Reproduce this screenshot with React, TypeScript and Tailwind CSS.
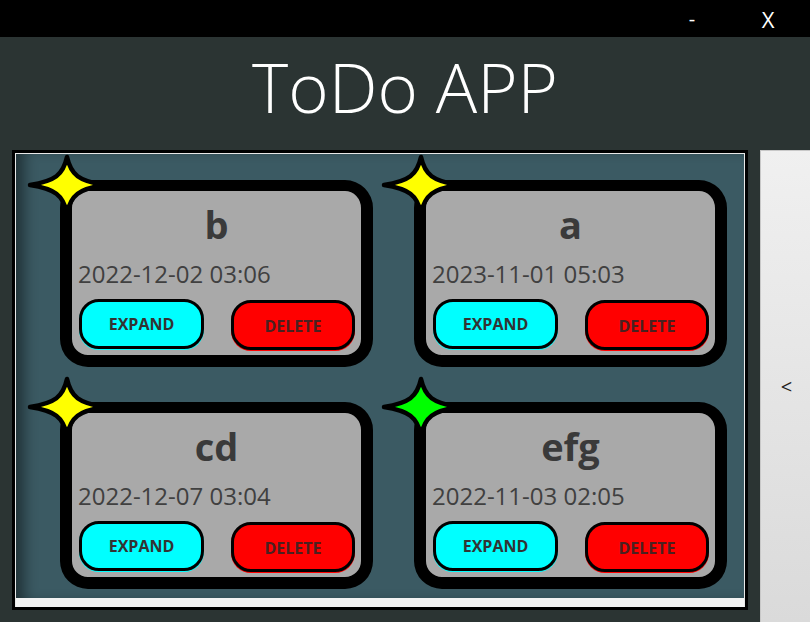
import React from "react";

type Todo = { title: string; date: string; star: string };

const todos: Todo[] = [
  { title: "b", date: "2022-12-02 03:06", star: "#ffff00" },
  { title: "a", date: "2023-11-01 05:03", star: "#ffff00" },
  { title: "cd", date: "2022-12-07 03:04", star: "#ffff00" },
  { title: "efg", date: "2022-11-03 02:05", star: "#00ff00" },
];

function Star({ color }: { color: string }) {
  return (
    <svg
      width="82"
      height="62"
      viewBox="0 0 82 62"
      className="absolute left-[-46px] top-[-37px]"
    >
      <path
        d="M41,3 C45,21 53,27 78,31 C53,35 45,41 41,59 C37,41 29,35 4,31 C29,27 37,21 41,3 Z"
        fill={color}
        stroke="#000"
        strokeWidth="4.5"
        strokeLinejoin="round"
      />
    </svg>
  );
}

function Card({ t }: { t: Todo }) {
  return (
    <div className="relative h-[187px] w-[313px] rounded-[28px] border-[12px] border-t-[11px] border-black bg-[#a9a9a9]">
      <div className="flex h-full flex-col rounded-[16px]">
        <div className="mt-[14px] text-center text-[38px] font-bold leading-[38px] text-[#3a3a3a]">
          {t.title}
        </div>
        <div className="mt-[19px] pl-[6px] text-[24px] leading-[24px] text-[#404040]">
          {t.date}
        </div>
        <div className="mt-[13px] flex justify-between pl-[7px] pr-[6px]">
          <button className="h-[50px] w-[125px] rounded-[20px] border-[3px] border-black bg-[#00ffff] text-[16px] font-bold text-[#333] shadow-[0_1px_0_#00ffff]">
            EXPAND
          </button>
          <button className="mt-[1px] h-[50px] w-[124px] rounded-[20px] border-[3px] border-black bg-[#ff0000] pt-[2px] text-[16px] font-bold text-[#4a2020] shadow-[0_1px_0_#ff0000]">
            DELETE
          </button>
        </div>
      </div>
      <Star color={t.star} />
    </div>
  );
}

export default function App() {
  return (
    <div
      className="h-[622px] w-[810px] overflow-hidden bg-[#2b3433]"
      style={{ fontFamily: '"Open Sans", "Noto Sans", sans-serif' }}
    >
      {/* title bar */}
      <div className="flex h-[37px] justify-end bg-black pr-[4px] text-white">
        <div className="flex w-[76px] items-center justify-center text-[20px] leading-none">-</div>
        <div className="flex w-[76px] items-center justify-center text-[22px] leading-none">X</div>
      </div>
      {/* header */}
      <div className="h-[113px] pt-[15px] text-center text-[69px] font-light leading-[68px] text-white">
        ToDo APP
      </div>
      {/* body */}
      <div className="flex gap-[12px] pl-[12px]">
        <div className="h-[460px] w-[736px] border-[3px] border-black">
          <div className="flex h-full flex-col border border-[#e8e8e8] border-b-0">
            <div className="h-[444px] bg-[#3b5a63] pl-[44px] pt-[26px] shadow-[inset_14px_0_14px_-6px_rgba(0,0,0,0.45)]">
              <div className="grid grid-cols-[313px_313px] gap-x-[41px] gap-y-[35px]">
                {todos.map((t) => (
                  <Card key={t.title} t={t} />
                ))}
              </div>
            </div>
            <div className="flex-1 bg-[#f3f3f3]" />
          </div>
        </div>
        <div className="flex h-[472px] flex-1 items-center justify-center border-l border-t border-[#c8c8c8] bg-gradient-to-b from-[#f0f0f0] to-[#dadada] pl-[2px] text-[20px] text-[#222]">
          &lt;
        </div>
      </div>
    </div>
  );
}
